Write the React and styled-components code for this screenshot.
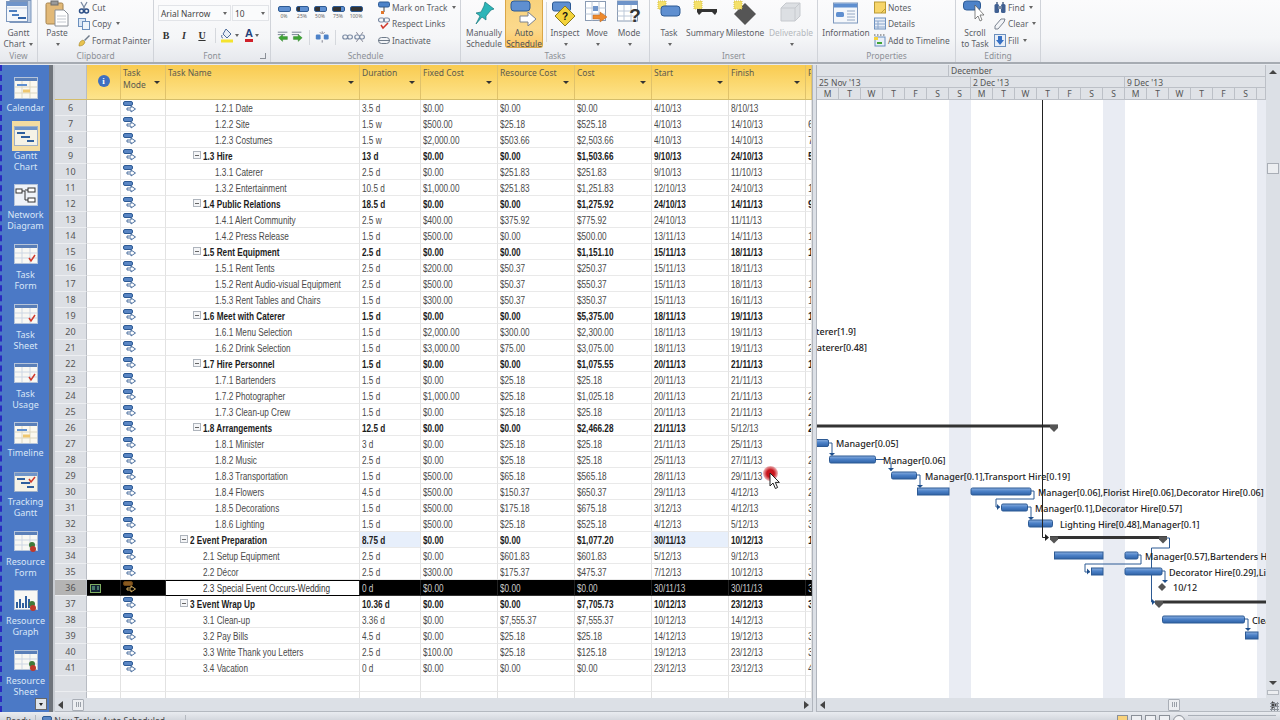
import React from 'react';
import styled, { createGlobalStyle } from 'styled-components';

const Global = createGlobalStyle`
  html, body { margin: 0; padding: 0; background: #fff; }
  #root { width: 1280px; height: 720px; overflow: hidden; }
`;

const UI_FONT = '"Noto Sans", "Liberation Sans", sans-serif';
const CELL_FONT = '"Liberation Sans", Arial, sans-serif';

// id, name, level, summary, duration, fixed, resource, cost, start, finish, pred
const tasks = [
  [6, '1.2.1 Date', 3, 0, '3.5 d', '$0.00', '$0.00', '$0.00', '4/10/13', '8/10/13', ''],
  [7, '1.2.2 Site', 3, 0, '1.5 w', '$500.00', '$25.18', '$525.18', '4/10/13', '14/10/13', '6'],
  [8, '1.2.3 Costumes', 3, 0, '1.5 w', '$2,000.00', '$503.66', '$2,503.66', '4/10/13', '14/10/13', '7'],
  [9, '1.3 Hire', 2, 1, '13 d', '$0.00', '$0.00', '$1,503.66', '9/10/13', '24/10/13', '5'],
  [10, '1.3.1 Caterer', 3, 0, '2.5 d', '$0.00', '$251.83', '$251.83', '9/10/13', '11/10/13', ''],
  [11, '1.3.2 Entertainment', 3, 0, '10.5 d', '$1,000.00', '$251.83', '$1,251.83', '12/10/13', '24/10/13', '1'],
  [12, '1.4 Public Relations', 2, 1, '18.5 d', '$0.00', '$0.00', '$1,275.92', '24/10/13', '14/11/13', '9'],
  [13, '1.4.1 Alert Community', 3, 0, '2.5 w', '$400.00', '$375.92', '$775.92', '24/10/13', '11/11/13', ''],
  [14, '1.4.2 Press Release', 3, 0, '1.5 d', '$500.00', '$0.00', '$500.00', '13/11/13', '14/11/13', '1'],
  [15, '1.5 Rent Equipment', 2, 1, '2.5 d', '$0.00', '$0.00', '$1,151.10', '15/11/13', '18/11/13', '1'],
  [16, '1.5.1 Rent Tents', 3, 0, '2.5 d', '$200.00', '$50.37', '$250.37', '15/11/13', '18/11/13', ''],
  [17, '1.5.2 Rent Audio-visual Equipment', 3, 0, '2.5 d', '$500.00', '$50.37', '$550.37', '15/11/13', '18/11/13', '1'],
  [18, '1.5.3 Rent Tables and Chairs', 3, 0, '1.5 d', '$300.00', '$50.37', '$350.37', '15/11/13', '16/11/13', '1'],
  [19, '1.6 Meet with Caterer', 2, 1, '1.5 d', '$0.00', '$0.00', '$5,375.00', '18/11/13', '19/11/13', '1'],
  [20, '1.6.1 Menu Selection', 3, 0, '1.5 d', '$2,000.00', '$300.00', '$2,300.00', '18/11/13', '19/11/13', ''],
  [21, '1.6.2 Drink Selection', 3, 0, '1.5 d', '$3,000.00', '$75.00', '$3,075.00', '18/11/13', '19/11/13', '2'],
  [22, '1.7 Hire Personnel', 2, 1, '1.5 d', '$0.00', '$0.00', '$1,075.55', '20/11/13', '21/11/13', '1'],
  [23, '1.7.1 Bartenders', 3, 0, '1.5 d', '$0.00', '$25.18', '$25.18', '20/11/13', '21/11/13', ''],
  [24, '1.7.2 Photographer', 3, 0, '1.5 d', '$1,000.00', '$25.18', '$1,025.18', '20/11/13', '21/11/13', '2'],
  [25, '1.7.3 Clean-up Crew', 3, 0, '1.5 d', '$0.00', '$25.18', '$25.18', '20/11/13', '21/11/13', '2'],
  [26, '1.8 Arrangements', 2, 1, '12.5 d', '$0.00', '$0.00', '$2,466.28', '21/11/13', '5/12/13', '2'],
  [27, '1.8.1 Minister', 3, 0, '3 d', '$0.00', '$25.18', '$25.18', '21/11/13', '25/11/13', ''],
  [28, '1.8.2 Music', 3, 0, '2.5 d', '$0.00', '$25.18', '$25.18', '25/11/13', '27/11/13', '2'],
  [29, '1.8.3 Transportation', 3, 0, '1.5 d', '$500.00', '$65.18', '$565.18', '28/11/13', '29/11/13', '2'],
  [30, '1.8.4 Flowers', 3, 0, '4.5 d', '$500.00', '$150.37', '$650.37', '29/11/13', '4/12/13', '2'],
  [31, '1.8.5 Decorations', 3, 0, '1.5 d', '$500.00', '$175.18', '$675.18', '3/12/13', '4/12/13', '3'],
  [32, '1.8.6 Lighting', 3, 0, '1.5 d', '$500.00', '$25.18', '$525.18', '4/12/13', '5/12/13', '3'],
  [33, '2 Event Preparation', 1, 1, '8.75 d', '$0.00', '$0.00', '$1,077.20', '30/11/13', '10/12/13', '1'],
  [34, '2.1 Setup Equipment', 2, 0, '2.5 d', '$0.00', '$601.83', '$601.83', '5/12/13', '9/12/13', ''],
  [35, '2.2 Décor', 2, 0, '2.5 d', '$300.00', '$175.37', '$475.37', '7/12/13', '10/12/13', '3'],
  [36, '2.3 Special Event Occurs-Wedding', 2, 0, '0 d', '$0.00', '$0.00', '$0.00', '30/11/13', '30/11/13', '3'],
  [37, '3 Event Wrap Up', 1, 1, '10.36 d', '$0.00', '$0.00', '$7,705.73', '10/12/13', '23/12/13', '3'],
  [38, '3.1 Clean-up', 2, 0, '3.36 d', '$0.00', '$7,555.37', '$7,555.37', '10/12/13', '14/12/13', ''],
  [39, '3.2 Pay Bills', 2, 0, '4.5 d', '$0.00', '$25.18', '$25.18', '14/12/13', '19/12/13', '3'],
  [40, '3.3 Write Thank you Letters', 2, 0, '2.5 d', '$100.00', '$25.18', '$125.18', '19/12/13', '23/12/13', '3'],
  [41, '3.4 Vacation', 2, 0, '0 d', '$0.00', '$0.00', '$0.00', '23/12/13', '23/12/13', '4'],
];

const COLS = '32px 34px 45px 194px 61px 77px 77px 77px 77px 77px 6px';
const SELECTED = 36;

const App = () => (
  <Page>
    <Global />
    <Ribbon>
      <Group $w={38} label="View">
        <LargeBtn $w={37}>
          <Ico><GanttIcon /></Ico>
          <span>Gantt</span>
          <span>Chart <Caret /></span>
        </LargeBtn>
      </Group>

      <Group $w={116} label="Clipboard" $pad={1}>
        <LargeBtn $w={36}>
          <Ico><PasteIcon /></Ico>
          <span>Paste</span>
          <span><Caret /></span>
        </LargeBtn>
        <SmallCol $ml={3}>
          <SmallRow><ScissorsIcon /> Cut</SmallRow>
          <SmallRow><CopyIcon /> Copy <Caret /></SmallRow>
          <SmallRow><BrushIcon /> Format Painter</SmallRow>
        </SmallCol>
      </Group>

      <Group $w={117} label="Font" launcher>
        <FontCol>
          <FontSelects>
            <FontBox $w={73}>Arial Narrow<Caret /></FontBox>
            <FontBox $w={37}>10<Caret /></FontBox>
          </FontSelects>
          <FontTools>
            <FontBtn><b>B</b></FontBtn>
            <FontBtn><i><b>I</b></i></FontBtn>
            <FontBtn><u><b>U</b></u></FontBtn>
            <ToolSep />
            <FillIcon /><Caret />
            <FontColor>A</FontColor><Caret />
          </FontTools>
        </FontCol>
      </Group>

      <Group $w={190} label="Schedule" $pad={4}>
        <ScheduleGrid>
          <PctRow>
            {['0%', '25%', '50%', '75%', '100%'].map((p, i) => (
              <Pct key={p}><PctBar $fill={i * 25} />{p}</Pct>
            ))}
          </PctRow>
          <ScheduleTools>
            <OutdentIcon color="#3fa535" dir="left" />
            <OutdentIcon color="#3fa535" dir="right" />
            <ToolSep />
            <SplitIcon />
            <ToolSep />
            <ChainIcon />
            <ChainIcon broken />
          </ScheduleTools>
        </ScheduleGrid>
        <SmallCol $ml={13}>
          <SmallRow><TrackIcon /> Mark on Track <Caret /></SmallRow>
          <SmallRow><RespectIcon /> Respect Links</SmallRow>
          <SmallRow><InactiveIcon /> Inactivate</SmallRow>
        </SmallCol>
      </Group>

      <Group $w={189} label="Tasks" $pad={4}>
        <LargeBtn $w={38}>
          <Ico><PinIcon /></Ico>
          <span>Manually</span>
          <span>Schedule</span>
        </LargeBtn>
        <LargeBtn $w={38} $active $ml={2}>
          <Ico><AutoIcon /></Ico>
          <span>Auto</span>
          <span>Schedule</span>
        </LargeBtn>
        <VSep />
        <LargeBtn $w={32}>
          <Ico><InspectIcon /></Ico>
          <span>Inspect</span>
          <span><Caret /></span>
        </LargeBtn>
        <LargeBtn $w={32}>
          <Ico><MoveIcon /></Ico>
          <span>Move</span>
          <span><Caret /></span>
        </LargeBtn>
        <LargeBtn $w={32}>
          <Ico><ModeIcon /></Ico>
          <span>Mode</span>
          <span><Caret /></span>
        </LargeBtn>
      </Group>

      <Group $w={168} label="Insert" $pad={1}>
        <LargeBtn $w={36}>
          <Ico><NewTaskIcon /></Ico>
          <span>Task</span>
          <span><Caret /></span>
        </LargeBtn>
        <LargeBtn $w={36}>
          <Ico><NewSummaryIcon /></Ico>
          <span>Summary</span>
        </LargeBtn>
        <LargeBtn $w={44}>
          <Ico><NewMilestoneIcon /></Ico>
          <span>Milestone</span>
        </LargeBtn>
        <LargeBtn $w={48} $disabled>
          <Ico><DeliverableIcon /></Ico>
          <span>Deliverable</span>
          <span><Caret /></span>
        </LargeBtn>
      </Group>

      <Group $w={138} label="Properties" $pad={5}>
        <LargeBtn $w={46}>
          <Ico><InfoCardIcon /></Ico>
          <span>Information</span>
        </LargeBtn>
        <SmallCol $ml={5}>
          <SmallRow><NoteIcon /> Notes</SmallRow>
          <SmallRow><DetailsIcon /> Details</SmallRow>
          <SmallRow><TimelineAddIcon /> Add to Timeline</SmallRow>
        </SmallCol>
      </Group>

      <Group $w={85} label="Editing" $pad={2}>
        <LargeBtn $w={34}>
          <Ico><ScrollIcon /></Ico>
          <span>Scroll</span>
          <span>to Task</span>
        </LargeBtn>
        <SmallCol $ml={2}>
          <SmallRow><FindIcon /> Find <Caret /></SmallRow>
          <SmallRow><ClearIcon /> Clear <Caret /></SmallRow>
          <SmallRow><FillDownIcon /> Fill <Caret /></SmallRow>
        </SmallCol>
      </Group>
    </Ribbon>

    <Main>
      <ViewBar>
        <ViewList>
          <ViewItem label={['Calendar']} $h={48}><CalendarView /></ViewItem>
          <ViewItem label={['Gantt', 'Chart']} $h={59} $active><GanttView /></ViewItem>
          <ViewItem label={['Network', 'Diagram']} $h={60}><NetworkView /></ViewItem>
          <ViewItem label={['Task', 'Form']} $h={60}><SheetView check /></ViewItem>
          <ViewItem label={['Task', 'Sheet']} $h={59}><SheetView check /></ViewItem>
          <ViewItem label={['Task', 'Usage']} $h={59}><SheetView check /></ViewItem>
          <ViewItem label={['Timeline']} $h={49}><CalendarView /></ViewItem>
          <ViewItem label={['Tracking', 'Gantt']} $h={60}><GanttView check /></ViewItem>
          <ViewItem label={['Resource', 'Form']} $h={59}><SheetView res /></ViewItem>
          <ViewItem label={['Resource', 'Graph']} $h={60}><GraphView /></ViewItem>
          <ViewItem label={['Resource', 'Sheet']} $h={50}><SheetView res /></ViewItem>
        </ViewList>
        <MoreViews><Caret $dark /></MoreViews>
      </ViewBar>
      <ViewStrip />

      <TablePane>
        <TableHead>
          <CornerCell />
          <HeadCell $center><InfoBadge>i</InfoBadge></HeadCell>
          <HeadCell>Task<br />Mode<HeadArrow /></HeadCell>
          <HeadCell>Task Name<HeadArrow /></HeadCell>
          <HeadCell>Duration<HeadArrow /></HeadCell>
          <HeadCell>Fixed Cost<HeadArrow /></HeadCell>
          <HeadCell>Resource Cost<HeadArrow /></HeadCell>
          <HeadCell>Cost<HeadArrow /></HeadCell>
          <HeadCell>Start<HeadArrow /></HeadCell>
          <HeadCell>Finish<HeadArrow /></HeadCell>
          <HeadCell>P</HeadCell>
        </TableHead>
        <TableBody>
          {tasks.map((t) => <TaskRow key={t[0]} t={t} />)}
          <BlankRow />
          <BlankRow />
        </TableBody>
        <HScroll>
          <ScrollArrow $dir="left" />
          <ScrollThumb $left={9}><Grip /></ScrollThumb>
          <ScrollFill />
          <ScrollArrow $dir="right" />
        </HScroll>
      </TablePane>

      <Splitter />

      <GanttPane>
        <GanttTop>
          <GanttCol>
            <TimeTier>
              <TimeCell $w={132} />
              <TimeCell $w={317}>December</TimeCell>
            </TimeTier>
            <TimeTier>
              <TimeCell $w={154}>25 Nov '13</TimeCell>
              <TimeCell $w={154}>2 Dec '13</TimeCell>
              <TimeCell $w={141}>9 Dec '13</TimeCell>
            </TimeTier>
            <TimeTier>
              {'MTWTFSSMTWTFSSMTWTFS'.split('').map((d, i) => (
                <DayCell key={i} $w={22}>{d}</DayCell>
              ))}
              <DayCell $w={9} />
            </TimeTier>
            <GanttChart />
          </GanttCol>
          <VScroll>
            <VArrow />
            <VThumb />
            <VArrow $down />
            <VSplit />
          </VScroll>
        </GanttTop>
        <HScroll>
          <ScrollArrow $dir="left" />
          <ScrollFill />
          <ScrollThumb $left={0}><Grip /></ScrollThumb>
          <ScrollFill $w={92} />
          <ScrollArrow $dir="right" />
          <Resize />
        </HScroll>
      </GanttPane>
    </Main>

    <StatusBar>
      <StatusItem $w={36}>Ready</StatusItem>
      <StatusItem $w={150}><ModeIcon16 /> New Tasks : Auto Scheduled</StatusItem>
      <StatusRight>
        <StatusView $active />
        <StatusView />
        <StatusView />
        <StatusView />
        <ZoomKnob />
        <ZoomTrack />
      </StatusRight>
    </StatusBar>

    <Pointer>
      <PointerGlow />
      <svg width="12" height="18" viewBox="0 0 12 18" style={{ position: 'relative' }}>
        <path d="M1 1v13l3-3 2.400 5.500 2.200-1L6.300 10.400H10.400z" fill="#fff" stroke="#222" strokeWidth="1" />
      </svg>
    </Pointer>
  </Page>
);

export default App;

/* ---------- table rows ---------- */

const TaskRow = ({ t }) => {
  const [id, name, level, summary, dur, fixed, res, cost, start, finish, pred] = t;
  const on = id === SELECTED;
  const bold = !!summary;
  const pad = level === 3 ? 49 : level === 2 ? 37 : 24;
  return (
    <Row>
      <RowNum $on={on}>{id}</RowNum>
      <Cell $on={on}>{on && <IndicatorIcon />}</Cell>
      <Cell $on={on}><ModeGlyph on={on} /></Cell>
      <NameCell $pad={pad} $bold={bold} $on={on}>
        {bold && <Collapse />}
        <Narrow>{name}</Narrow>
      </NameCell>
      <Cell $on={on} $bold={bold} $changed={id === 33}><Narrow>{dur}</Narrow></Cell>
      <Cell $on={on} $bold={bold}><Narrow>{fixed}</Narrow></Cell>
      <Cell $on={on} $bold={bold}><Narrow>{res}</Narrow></Cell>
      <Cell $on={on} $bold={bold}><Narrow>{cost}</Narrow></Cell>
      <Cell $on={on} $bold={bold} $changed={id === 33}><Narrow>{start}</Narrow></Cell>
      <Cell $on={on} $bold={bold && id !== 26}><Narrow>{finish}</Narrow></Cell>
      <Cell $on={on} $bold={bold}>{pred}</Cell>
    </Row>
  );
};

const BlankRow = () => (
  <Row>
    <RowNum />
    {Array.from({ length: 10 }).map((_, i) => <Cell key={i} />)}
  </Row>
);

/* ---------- gantt chart drawing ---------- */

const Bar = ({ x, w, y }) => (
  <rect x={x + 0.5} y={y - 3.5} width={w - 1} height={7} rx={1.5} fill="url(#taskBar)" stroke="#2d5a94" strokeWidth="1" />
);

const Summary = ({ x1, x2, y, start = true }) => (
  <g fill="#555">
    <rect x={x1} y={y - 1.5} width={x2 - x1} height={3} fill="#333" />
    {start && <path d={`M${x1} ${y - 1}h8v3l-4 4-4-4z`} />}
    <path d={`M${x2 - 8} ${y - 1}h8v3l-4 4-4-4z`} />
  </g>
);

const Link = ({ d, dir = 'down', x, y }) => (
  <g>
    <path d={d} fill="none" stroke="#2d5a94" strokeWidth="1" />
    {dir === 'down'
      ? <path d={`M${x - 3} ${y - 3}h6l-3 3z`} fill="#1e4f8c" />
      : <path d={`M${x - 3} ${y - 3}v6l3-3z`} fill="#1e4f8c" />}
  </g>
);

const Label = ({ x, y, anchor = 'start', children }) => (
  <text x={x} y={y + 1} textAnchor={anchor} fontFamily={UI_FONT} fontSize="9" fontWeight="500" fill="#222">
    {children}
  </text>
);

const GanttChart = () => (
  <ChartBox>
    <svg width="449" height="598" viewBox="817 100 449 598" style={{ display: 'block' }}>
      <defs>
        <linearGradient id="taskBar" x1="0" y1="0" x2="0" y2="1">
          <stop offset="0" stopColor="#8cb0e0" />
          <stop offset="0.45" stopColor="#4d82c8" />
          <stop offset="1" stopColor="#2f62a6" />
        </linearGradient>
      </defs>
      <rect x="817" y="100" width="449" height="598" fill="#fff" />
      {[949, 1103, 1257].map((x) => <rect key={x} x={x} y="100" width="22" height="598" fill="#e9ecf3" />)}

      <Label x={856} y={334} anchor="end">Caterer[1.9]</Label>
      <Label x={867} y={350} anchor="end">Caterer[0.48]</Label>

      <Summary x1={810} x2={1058} y={426} start={false} />

      <Bar x={812} w={17} y={443} />
      <Label x={836} y={446}>Manager[0.05]</Label>
      <Link d="M829 443h3v12" x={832} y={456} />

      <Bar x={829} w={47} y={459.5} />
      <path d="M876 459.500h8" stroke="#2d5a94" />
      <Label x={883} y={463}>Manager[0.06]</Label>
      <Link d="M891 463v8" x={891} y={471} />

      <Bar x={891} w={26} y={475.5} />
      <Label x={925} y={479}>Manager[0.1],Transport Hire[0.19]</Label>
      <Link d="M917 475h3v12" x={920} y={488} />

      <rect x="917.5" y="488" width="31.5" height="7" fill="url(#taskBar)" stroke="#2d5a94" />
      <rect x="971" y="488" width="60" height="7" rx="1.5" fill="url(#taskBar)" stroke="#2d5a94" />
      <Label x={1038} y={495}>Manager[0.06],Florist Hire[0.06],Decorator Hire[0.06]</Label>
      <Link d="M1031 491h3v8h-38v8h4" dir="right" x={1000} y={507} />

      <Bar x={1001} w={27} y={507.5} />
      <Label x={1035} y={511}>Manager[0.1],Decorator Hire[0.57]</Label>
      <Link d="M1028 507h3v11" x={1031} y={520} />

      <Bar x={1028} w={25} y={523.5} />
      <Label x={1060} y={527}>Lighting Hire[0.48],Manager[0.1]</Label>

      <path d="M1042.5 100V537.500h4" fill="none" stroke="#222" />
      <path d="M1045 534v7l4-3.500z" fill="#222" />

      <Summary x1={1050} x2={1167} y={537.5} />
      <Link d="M1167 538h2.500v10h-18v54h4" dir="right" x={1155} y={602} />

      <rect x="1054.5" y="552" width="48.5" height="7" fill="url(#taskBar)" stroke="#2d5a94" />
      <rect x="1125" y="552" width="13" height="7" rx="1.5" fill="url(#taskBar)" stroke="#2d5a94" />
      <Label x={1145} y={559}>Manager[0.57],Bartenders Hire[0.57]</Label>
      <Link d="M1138 555h3v9h-56v8h5" dir="right" x={1090} y={571.5} />

      <rect x="1091.5" y="568" width="11.5" height="7" fill="url(#taskBar)" stroke="#2d5a94" />
      <rect x="1125" y="568" width="37" height="7" rx="1.5" fill="url(#taskBar)" stroke="#2d5a94" />
      <Label x={1169} y={575}>Decorator Hire[0.29],Lighting Hire[0.19]</Label>
      <Link d="M1162 571h3v11" x={1165} y={583} />

      <path d="M1162 583l4 4-4 4-4-4z" fill="#555" />
      <Label x={1173} y={590}>10/12</Label>

      <Summary x1={1155} x2={1290} y={602} />

      <Bar x={1162} w={83} y={619.5} />
      <Label x={1252} y={623}>Clean-up</Label>
      <Link d="M1245 619h3v11" x={1248} y={631} />
      <rect x="1245.5" y="632" width="12.5" height="7" fill="url(#taskBar)" stroke="#2d5a94" />
    </svg>
  </ChartBox>
);

/* ---------- small building blocks ---------- */

const Group = ({ $w, $pad, label, launcher, children }) => (
  <GroupBox $w={$w}>
    <GroupBody $pad={$pad}>{children}</GroupBody>
    <GroupLabel>
      {label}
      {launcher && <Launcher />}
    </GroupLabel>
  </GroupBox>
);

const ViewItem = ({ label, $h, $active, children }) => (
  <ViewItemBox $h={$h}>
    <ViewIcon $active={$active}>{children}</ViewIcon>
    {label.map((l) => <span key={l}>{l}</span>)}
  </ViewItemBox>
);

/* ---------- icons ---------- */

const Window = ({ w = 24, h = 20, y = 0 }) => (
  <>
    <rect x="0.5" y={y + 0.5} width={w - 1} height={h - 1} fill="#f4f7fb" stroke="#7d97bd" />
    <rect x="1" y={y + 1} width={w - 2} height="4" fill="#6f94c9" />
  </>
);

const GanttIcon = () => (
  <svg width="26" height="26" viewBox="0 0 26 26">
    <rect x="4" y="0.5" width="21" height="22" fill="#b9cbe3" stroke="#7d97bd" />
    <Window w={22} h={21} y={1} />
    <path d="M3 11h8M6 15h7" stroke="#4d7fc0" strokeWidth="2" />
    <path d="M12 18h8" stroke="#2f62a6" strokeWidth="2" />
    <path d="M1 8h20" stroke="#ccd6e4" />
  </svg>
);

const PasteIcon = () => (
  <svg width="26" height="27" viewBox="0 0 26 27">
    <rect x="2" y="3" width="17" height="21" rx="1.5" fill="#e2b978" stroke="#a5824c" />
    <rect x="7" y="1" width="7" height="4" fill="#9a9a9a" stroke="#6d6d6d" />
    <path d="M11 10h9l4 4v12H11z" fill="#fff" stroke="#8a8f97" />
    <path d="M13 16h9M13 19h9M13 22h9" stroke="#c4c8cf" />
  </svg>
);

const ScissorsIcon = () => (
  <svg width="12" height="13" viewBox="0 0 12 13">
    <path d="M3 1l4 7M9 1L5 8" stroke="#7a8aa3" strokeWidth="1.3" />
    <circle cx="3.5" cy="10" r="2" fill="none" stroke="#2d4f86" strokeWidth="1.5" />
    <circle cx="8.5" cy="10" r="2" fill="none" stroke="#2d4f86" strokeWidth="1.5" />
  </svg>
);

const CopyIcon = () => (
  <svg width="12" height="13" viewBox="0 0 12 13">
    <rect x="0.5" y="1.5" width="7" height="8" fill="#dbe7f6" stroke="#6b8fbd" />
    <rect x="4.5" y="4.5" width="7" height="8" fill="#eef4fb" stroke="#6b8fbd" />
  </svg>
);

const BrushIcon = () => (
  <svg width="12" height="13" viewBox="0 0 12 13">
    <path d="M1 12c0-3 1-5 4-6l2 2c-1 3-3 4-6 4z" fill="#e8c24f" stroke="#a48627" strokeWidth="0.6" />
    <path d="M6 6l5-5 1 1-5 5z" fill="#6f7b8a" />
  </svg>
);

const FillIcon = () => (
  <svg width="12" height="15" viewBox="0 0 12 15">
    <path d="M5 1l5 5-4 4-4-4z" fill="#e9eef6" stroke="#4d6c9b" />
    <path d="M1 7c-1 2 0 3 1 3" stroke="#4d6c9b" fill="none" />
    <rect x="0" y="11.5" width="12" height="3" fill="#f4e32f" />
  </svg>
);

const OutdentIcon = ({ color, dir }) => (
  <svg width="16" height="14" viewBox="0 0 16 14">
    <path d="M1 1h12M1 4h9" stroke="#5c6b7d" />
    <path d={dir === 'left' ? 'M2 8l5-4v2.500h6v3.500H7v2.500z' : 'M14 8L9 4v2.500H3v3.500h6v2.500z'} fill={color} stroke="#2d7d28" strokeWidth="0.5" />
  </svg>
);

const SplitIcon = () => (
  <svg width="18" height="14" viewBox="0 0 18 14">
    <rect x="1" y="4" width="6" height="6" rx="1.5" fill="#4d82c8" />
    <rect x="11" y="4" width="6" height="6" rx="1.5" fill="#4d82c8" />
    <path d="M9 0v3M9 11v3M6 1l2 2M12 1l-2 2" stroke="#667" />
  </svg>
);

const ChainIcon = ({ broken }) => (
  <svg width="14" height="14" viewBox="0 0 14 14">
    <rect x="1" y="4.5" width="6" height="5" rx="2.5" fill="none" stroke="#7a8aa3" strokeWidth="1.5" />
    <rect x="7" y="4.5" width="6" height="5" rx="2.5" fill="none" stroke="#7a8aa3" strokeWidth="1.5" />
    {broken && <path d="M3 1l2 3M11 1L9 4M3 13l2-3M11 13l-2-3" stroke="#667" />}
  </svg>
);

const TrackIcon = () => (
  <svg width="12" height="13" viewBox="0 0 12 13">
    <rect x="0.5" y="1" width="11" height="5" rx="1.5" fill="#4d82c8" stroke="#2d5a94" />
    <path d="M6 6v5" stroke="#444" />
    <path d="M3 10h3v3H3z" fill="#e2762b" />
  </svg>
);

const RespectIcon = () => (
  <svg width="12" height="13" viewBox="0 0 12 13">
    <rect x="0.5" y="1" width="6" height="4" rx="2" fill="none" stroke="#7a8aa3" strokeWidth="1.2" />
    <rect x="5.5" y="1" width="6" height="4" rx="2" fill="none" stroke="#7a8aa3" strokeWidth="1.2" />
    <path d="M3 8l2 3 5-5" fill="none" stroke="#d0382b" strokeWidth="1.5" />
  </svg>
);

const InactiveIcon = () => (
  <svg width="12" height="13" viewBox="0 0 12 13">
    <rect x="0.5" y="3.5" width="11" height="6" rx="3" fill="#f2f4f7" stroke="#6f7b8a" />
    <path d="M0 6.500h12" stroke="#6f7b8a" />
  </svg>
);

const PinIcon = () => (
  <svg width="24" height="26" viewBox="0 0 24 26">
    <path d="M13 2l9 7-3 1-5 6 0 4-4-3-6 7 4-8-4-3 5-1 3-6z" fill="#2bb5b8" stroke="#17797c" strokeWidth="0.7" />
  </svg>
);

const AutoIcon = () => (
  <svg width="28" height="26" viewBox="0 0 28 26">
    <rect x="1" y="1" width="19" height="10" rx="3" fill="#5f8fd0" stroke="#2d5a94" />
    <path d="M10 16h8v-4l8 7-8 7v-4h-8z" fill="#fff" stroke="#7a8290" />
  </svg>
);

const InspectIcon = () => (
  <svg width="26" height="26" viewBox="0 0 26 26">
    <rect x="0.5" y="2" width="18" height="9" rx="2" fill="#5f8fd0" stroke="#2d5a94" />
    <path d="M13 6l10 10-10 10L3 16z" fill="#f4d33b" stroke="#8c7a1d" />
    <text x="13" y="20" textAnchor="middle" fontSize="10" fontWeight="700" fontFamily="Liberation Sans" fill="#111">?</text>
  </svg>
);

const MoveIcon = () => (
  <svg width="24" height="26" viewBox="0 0 24 26">
    <rect x="0.5" y="1.5" width="20" height="19" fill="#fff" stroke="#8a9bb3" />
    <path d="M7 1.500v19M14 1.500v19M0.500 8h20M0.500 14h20" stroke="#bcc8d8" />
    <rect x="8" y="6" width="5" height="5" fill="#6f94c9" />
    <path d="M8 15h7v-3l7 5-7 5v-3H8z" fill="#ee8a2c" stroke="#b9631a" strokeWidth="0.5" />
  </svg>
);

const ModeIcon = () => (
  <svg width="24" height="26" viewBox="0 0 24 26">
    <rect x="0.5" y="1" width="20" height="20" fill="#fff" stroke="#8a9bb3" />
    <rect x="0.5" y="1" width="20" height="4" fill="#6f94c9" />
    <path d="M7 5v16M14 5v16M0.500 11h20M0.500 16h20" stroke="#bcc8d8" />
    <text x="18" y="22" textAnchor="middle" fontSize="19" fontWeight="700" fontFamily="Liberation Sans" fill="#333">?</text>
  </svg>
);

const Spark = () => (
  <path d="M1 1h8v8H1z" fill="#f4e06a" stroke="#d6c14a" strokeDasharray="1 1" />
);

const NewTaskIcon = () => (
  <svg width="24" height="22" viewBox="0 0 24 22">
    <Spark />
    <rect x="4" y="6" width="19" height="10" rx="3" fill="#5f8fd0" stroke="#2d5a94" />
  </svg>
);

const NewSummaryIcon = () => (
  <svg width="24" height="22" viewBox="0 0 24 22">
    <Spark />
    <path d="M4 9h20v3l-2 3-3-3H9l-3 3-2-3z" fill="#333" />
  </svg>
);

const NewMilestoneIcon = () => (
  <svg width="24" height="26" viewBox="0 0 24 26">
    <path d="M12 3l11 11-11 11L1 14z" fill="#555" />
    <Spark />
  </svg>
);

const DeliverableIcon = () => (
  <svg width="22" height="24" viewBox="0 0 22 24">
    <path d="M1 8l5-5h14v13l-5 5H1z" fill="#dcdfe3" stroke="#c6c9ce" />
    <path d="M1 8h14v13M15 8l5-5" fill="none" stroke="#c6c9ce" />
  </svg>
);

const InfoCardIcon = () => (
  <svg width="26" height="24" viewBox="0 0 26 24">
    <rect x="0.5" y="3" width="24" height="20" fill="#f4f7fb" stroke="#7d97bd" />
    <rect x="1" y="3.5" width="23" height="4" fill="#5f8fd0" />
    <rect x="3" y="12" width="8" height="5" rx="1.5" fill="#5f8fd0" />
    <path d="M14 11h8M14 14h8M14 17h8M14 20h8" stroke="#94a8c4" />
  </svg>
);

const NoteIcon = () => (
  <svg width="12" height="13" viewBox="0 0 12 13">
    <rect x="0.5" y="1" width="11" height="11" fill="#f7d56a" stroke="#b99a35" />
    <path d="M7 12l4-4" stroke="#b99a35" />
  </svg>
);

const DetailsIcon = () => (
  <svg width="12" height="13" viewBox="0 0 12 13">
    <rect x="0.5" y="1" width="11" height="11" fill="#e8eef7" stroke="#6b8fbd" />
    <path d="M0.500 4h11M0.500 7h11M0.500 10h11M4 4v8" stroke="#8aa6cc" />
  </svg>
);

const TimelineAddIcon = () => (
  <svg width="12" height="13" viewBox="0 0 12 13">
    <path d="M0 1h12" stroke="#555" strokeDasharray="1.5 1.5" />
    <rect x="1" y="3" width="10" height="9" fill="#e8eef7" stroke="#6b8fbd" />
    <path d="M3 9h5" stroke="#3fa535" strokeWidth="2" />
    <path d="M0 3h4v3H0z" fill="#f4d33b" />
  </svg>
);

const ScrollIcon = () => (
  <svg width="24" height="26" viewBox="0 0 24 26">
    <rect x="0.5" y="1" width="17" height="9" rx="3" fill="#4d82c8" stroke="#2d5a94" />
    <path d="M12 5v14l3-3 2 5 2-1-2-5h4z" fill="#fff" stroke="#555" strokeWidth="0.7" />
  </svg>
);

const FindIcon = () => (
  <svg width="12" height="13" viewBox="0 0 12 13">
    <rect x="0.5" y="3" width="4.5" height="9" rx="1.5" fill="#3f5f92" />
    <rect x="7" y="3" width="4.5" height="9" rx="1.5" fill="#3f5f92" />
    <path d="M4 5h4v3H4z" fill="#7a8aa3" />
    <path d="M2 1h2v2H2zM8 1h2v2H8z" fill="#7a8aa3" />
  </svg>
);

const ClearIcon = () => (
  <svg width="12" height="13" viewBox="0 0 12 13">
    <path d="M1 9l6-7h4l-1 3-6 7H1z" fill="#f2f4f7" stroke="#7a8290" />
  </svg>
);

const FillDownIcon = () => (
  <svg width="12" height="13" viewBox="0 0 12 13">
    <rect x="0.5" y="0.5" width="11" height="12" fill="#e8eef7" stroke="#6b8fbd" />
    <path d="M4 2h4v4h2l-4 5-4-5h2z" fill="#3670c4" />
  </svg>
);

const CalendarView = () => (
  <svg width="24" height="22" viewBox="0 0 24 22">
    <rect x="0.5" y="0.5" width="23" height="21" fill="#fbf8ef" stroke="#b5c4da" />
    <rect x="1" y="1" width="22" height="3" fill="#5a7fb8" />
    <path d="M8 4v17M16 4v17M1 10h22M1 16h22" stroke="#dcd7c3" />
    <path d="M3 8h10" stroke="#5f8fd0" strokeWidth="2" />
    <path d="M9 14h7" stroke="#efc76f" strokeWidth="3" />
  </svg>
);

const GanttView = ({ check }) => (
  <svg width="24" height="20" viewBox="0 0 24 20">
    <rect x="0.5" y="0.5" width="23" height="19" fill="#f5f2e6" stroke="#9fb0c8" />
    <rect x="1" y="1" width="22" height="3" fill="#6f94c9" />
    <path d="M3 7h8" stroke="#2f5f9e" strokeWidth="2" />
    <path d="M7 11h9" stroke="#2f5f9e" strokeWidth="2" />
    <path d="M13 15h7" stroke="#2f5f9e" strokeWidth="2" />
    {check && <path d="M15 7l2 3 4-5" fill="none" stroke="#d0382b" strokeWidth="1.5" />}
  </svg>
);

const NetworkView = () => (
  <svg width="24" height="22" viewBox="0 0 24 22">
    <rect x="0.5" y="0.5" width="23" height="21" fill="#eef2f8" stroke="#b5c4da" />
    <rect x="2" y="5" width="6" height="4" fill="#fff" stroke="#333" />
    <rect x="14" y="4" width="7" height="4" fill="#fff" stroke="#333" />
    <rect x="14" y="14" width="7" height="4" fill="#fff" stroke="#333" />
    <path d="M8 7h3v9h3M11 6h3" fill="none" stroke="#333" />
  </svg>
);

const SheetView = ({ check, res }) => (
  <svg width="24" height="22" viewBox="0 0 24 22">
    <rect x="0.5" y="0.5" width="23" height="19" fill="#f8f8f4" stroke="#b5c4da" />
    <rect x="1" y="1" width="22" height="3" fill="#5a7fb8" />
    <path d="M8 4v15M16 4v15M1 9h22M1 14h22" stroke="#cdd6e3" />
    {check && <path d="M15 14l2 3 4-6" fill="none" stroke="#d0382b" strokeWidth="1.5" />}
    {res && (
      <g>
        <circle cx="18" cy="14" r="3" fill="#3f7a3a" />
        <circle cx="19" cy="18" r="3" fill="#c0392b" />
      </g>
    )}
  </svg>
);

const GraphView = () => (
  <svg width="24" height="22" viewBox="0 0 24 22">
    <rect x="0.5" y="0.5" width="23" height="19" fill="#f8f8f4" stroke="#b5c4da" />
    <path d="M3 18v-6M6 18v-9M9 18v-5M12 18V6M15 18V9" stroke="#2f5f9e" strokeWidth="2" />
    <circle cx="18" cy="14" r="3" fill="#3f7a3a" />
    <circle cx="19" cy="18" r="3" fill="#c0392b" />
  </svg>
);

const ModeGlyph = ({ on }) => (
  <svg width="13" height="12" viewBox="0 0 13 12" style={{ display: 'block', marginTop: -3 }}>
    <rect x="0.5" y="0.5" width="9" height="4" rx="1.5" fill={on ? '#8a5a20' : '#5a86c4'} stroke={on ? '#6b4515' : '#2d5a94'} />
    <path d="M4 7h4V5l4.500 3L8 11V9H4z" fill={on ? '#000' : '#fff'} stroke={on ? '#d8b060' : '#4a6f9e'} />
  </svg>
);

const ModeIcon16 = () => (
  <svg width="10" height="8" viewBox="0 0 10 8">
    <rect x="0.5" y="0.5" width="9" height="4" rx="1.5" fill="#5a86c4" stroke="#2d5a94" />
  </svg>
);

const IndicatorIcon = () => (
  <svg width="11" height="9" viewBox="0 0 11 9" style={{ display: 'block', marginLeft: 1 }}>
    <rect x="0.5" y="0.5" width="10" height="8" fill="#123" stroke="#7fae62" />
    <path d="M2 3h3M2 5h3M7 3h2M7 5h2" stroke="#7fd0a0" />
  </svg>
);

/* ---------- styles ---------- */

const Page = styled.div`
  position: relative;
  width: 1280px;
  height: 720px;
  overflow: hidden;
  display: flex;
  flex-direction: column;
  font-family: ${UI_FONT};
  background: #e6e9ee;
`;

const Ribbon = styled.div`
  display: flex;
  height: 62px;
  flex: none;
  background: linear-gradient(#fbfbfc 0%, #f5f6f8 60%, #e6e8ed 100%);
  border-bottom: 2px solid #a6abb2;
  color: #5c6066;
`;

const GroupBox = styled.div`
  width: ${(p) => p.$w}px;
  flex: none;
  box-sizing: border-box;
  border-right: 1px solid #d0d3d9;
  display: flex;
  flex-direction: column;
`;

const GroupBody = styled.div`
  display: flex;
  height: 50px;
  padding-left: ${(p) => p.$pad || 0}px;
`;

const GroupLabel = styled.div`
  position: relative;
  flex: 1;
  text-align: center;
  font-size: 8.4px;
  line-height: 11px;
  color: #8c9096;
`;

const Launcher = styled.i`
  position: absolute;
  right: 4px;
  top: 3px;
  width: 5px;
  height: 5px;
  border-right: 1px solid #8a8f97;
  border-bottom: 1px solid #8a8f97;
`;

const LargeBtn = styled.div`
  width: ${(p) => p.$w}px;
  flex: none;
  margin-left: ${(p) => p.$ml || 0}px;
  height: 48px;
  box-sizing: border-box;
  display: flex;
  flex-direction: column;
  align-items: center;
  font-size: 8.4px;
  line-height: 10.5px;
  white-space: nowrap;
  color: ${(p) => (p.$disabled ? '#b4b7bc' : '#5c6066')};
  border-radius: 0 0 3px 3px;
  ${(p) => p.$active && `
    background: linear-gradient(#f8d27c, #fbd98c 60%, #fdc766);
    border: 1px solid #d9a648;
    border-top: 0;
    color: #4c4f55;
  `}
`;

const Ico = styled.div`
  height: 28px;
  flex: none;
  display: flex;
  align-items: flex-start;
  justify-content: center;
`;

const Caret = styled.i`
  display: inline-block;
  width: 0;
  height: 0;
  margin-left: ${(p) => (p.$dark ? 0 : 2)}px;
  vertical-align: middle;
  border-left: 2.5px solid transparent;
  border-right: 2.5px solid transparent;
  border-top: 3px solid ${(p) => (p.$dark ? '#222' : '#666')};
`;

const SmallCol = styled.div`
  display: flex;
  flex-direction: column;
  margin-left: ${(p) => p.$ml || 0}px;
  margin-top: -1px;
`;

const SmallRow = styled.div`
  height: 16.5px;
  display: flex;
  align-items: center;
  gap: 2px;
  font-size: 8.4px;
  white-space: nowrap;
  color: #5c6066;
`;

const FontCol = styled.div`
  display: flex;
  flex-direction: column;
  padding: 5px 0 0 4px;
`;

const FontSelects = styled.div`
  display: flex;
  gap: 1px;
`;

const FontBox = styled.div`
  width: ${(p) => p.$w}px;
  height: 16px;
  box-sizing: border-box;
  padding: 0 3px 0 2px;
  display: flex;
  align-items: center;
  justify-content: space-between;
  background: #fafbfc;
  border: 1px solid #e2e4e8;
  font-size: 8.4px;
  color: #444;
`;

const FontTools = styled.div`
  display: flex;
  align-items: center;
  height: 18px;
  margin: 5px 0 0 -1px;
  font-size: 10px;
  color: #333;
`;

const FontBtn = styled.span`
  width: 18px;
  text-align: center;
  font-family: "Liberation Serif", serif;
`;

const ToolSep = styled.i`
  width: 1px;
  height: 15px;
  background: #d5d8dd;
  margin: 0 5px 0 4px;
`;

const FontColor = styled.span`
  margin-left: 6px;
  font-family: "Liberation Sans", sans-serif;
  font-weight: 700;
  font-size: 11px;
  line-height: 11px;
  color: #1f3f7a;
  border-bottom: 3px solid #d0202a;
`;

const ScheduleGrid = styled.div`
  display: flex;
  flex-direction: column;
  width: 90px;
`;

const PctRow = styled.div`
  display: flex;
  padding-top: 6px;
  height: 20px;
`;

const Pct = styled.div`
  width: 18px;
  text-align: center;
  font-size: 5px;
  line-height: 6px;
  color: #666;
`;

const PctBar = styled.div`
  width: 13px;
  height: 6px;
  margin: 0 auto 1px;
  border-radius: 2px;
  border: 1px solid #2d5a94;
  box-sizing: border-box;
  background: linear-gradient(to right, #333 ${(p) => p.$fill}%, #5f8fd0 ${(p) => p.$fill}%);
`;

const ScheduleTools = styled.div`
  display: flex;
  align-items: center;
  height: 18px;
  margin-top: 2px;
  padding-left: 2px;
  gap: 1px;
`;

const VSep = styled.i`
  width: 1px;
  height: 40px;
  margin: 2px 2px 0 3px;
  background: #d5d8dd;
`;

const Main = styled.div`
  flex: 1;
  display: flex;
  min-height: 0;
  padding-top: 1px;
`;

const ViewBar = styled.div`
  position: relative;
  width: 49px;
  flex: none;
  box-sizing: border-box;
  background: #4b79c6;
  border-left: 2px dashed #2a2ac0;
`;

const ViewList = styled.div`
  display: flex;
  flex-direction: column;
  padding-top: 10px;
`;

const ViewItemBox = styled.div`
  height: ${(p) => p.$h}px;
  display: flex;
  flex-direction: column;
  align-items: center;
  font-size: 9px;
  line-height: 11px;
  color: #d9e6f7;
  white-space: nowrap;
`;

const ViewIcon = styled.div`
  height: 26px;
  margin-bottom: 1px;
  display: flex;
  align-items: center;
  ${(p) => p.$active && `
    outline: 2px solid #f4dca0;
    background: #f4dca0;
  `}
`;

const MoreViews = styled.div`
  position: absolute;
  right: 2px;
  bottom: 2px;
  width: 10px;
  height: 10px;
  background: #dfe4ea;
  border: 1px solid #666;
  display: flex;
  align-items: center;
  justify-content: center;
`;

const ViewStrip = styled.div`
  width: 6px;
  flex: none;
  background: linear-gradient(to right, #6f747b 60%, #c9cdd3 60%);
`;

const TablePane = styled.div`
  width: 757px;
  flex: none;
  display: flex;
  flex-direction: column;
`;

const TableHead = styled.div`
  display: grid;
  grid-template-columns: ${COLS};
  height: 35px;
  flex: none;
  border-bottom: 1px solid #d4bd6a;
  box-sizing: border-box;
`;

const CornerCell = styled.div`
  background: #d3d7dd;
  border-right: 1px solid #b8bcc3;
`;

const HeadCell = styled.div`
  position: relative;
  overflow: hidden;
  box-sizing: border-box;
  padding: 2px 0 0 2px;
  font-size: 8.5px;
  line-height: 11.5px;
  color: #5a5a50;
  background: linear-gradient(#f9cb50, #fde48c);
  border-right: 1px solid #e0c26a;
  ${(p) => p.$center && `
    display: flex;
    align-items: center;
    justify-content: center;
    padding: 0 0 2px;
  `}
`;

const HeadArrow = styled.i`
  position: absolute;
  right: 5px;
  top: 16px;
  width: 0;
  height: 0;
  border-left: 3px solid transparent;
  border-right: 3px solid transparent;
  border-top: 3px solid #333;
`;

const InfoBadge = styled.span`
  width: 12px;
  height: 12px;
  border-radius: 50%;
  background: #3f6fc0;
  color: #fff;
  font-size: 9px;
  font-weight: 700;
  line-height: 12px;
  text-align: center;
  font-family: "Liberation Serif", serif;
`;

const TableBody = styled.div`
  flex: 1;
  min-height: 0;
  overflow: hidden;
  background: #fff;
`;

const Row = styled.div`
  display: grid;
  grid-template-columns: ${COLS};
  height: 16px;
`;

const RowNum = styled.div`
  background: ${(p) => (p.$on ? '#b4b4b4' : '#dcdfe4')};
  border-right: 1px solid #b8bcc3;
  border-bottom: 1px solid #eceef1;
  box-sizing: border-box;
  text-align: center;
  font-size: 9px;
  line-height: 15px;
  color: #555;
`;

const Cell = styled.div`
  box-sizing: border-box;
  display: flex;
  align-items: center;
  overflow: hidden;
  white-space: nowrap;
  padding: 1px 0 0 2px;
  font-family: ${CELL_FONT};
  font-size: 10px;
  font-weight: ${(p) => (p.$bold ? 700 : 400)};
  color: ${(p) => (p.$on ? '#ccc' : p.$bold ? '#1c1c1c' : '#4a4a4a')};
  background: ${(p) => (p.$on ? '#000' : p.$changed ? '#e7effb' : '#fff')};
  border-right: 1px solid ${(p) => (p.$on ? '#222' : '#e2e2e2')};
  border-bottom: 1px solid ${(p) => (p.$on ? '#333' : '#e9e9e9')};
`;

// Arial Narrow is not installed: Liberation Sans squeezed to the same 82% width
const Narrow = styled.span`
  display: inline-block;
  flex: none;
  transform: scaleX(0.82);
  transform-origin: left center;
`;

const NameCell = styled(Cell)`
  position: relative;
  padding-left: ${(p) => p.$pad}px;
  background: #fff;
  color: ${(p) => (p.$on ? '#333' : p.$bold ? '#1c1c1c' : '#4a4a4a')};
  border-bottom-color: ${(p) => (p.$on ? '#000' : '#e9e9e9')};
  border-top: ${(p) => (p.$on ? '1px solid #000' : '0')};
`;

const Collapse = styled.i`
  position: absolute;
  margin-left: -10px;
  top: 3px;
  width: 6px;
  height: 6px;
  border: 1px solid #aeb4bc;
  background: linear-gradient(#666, #666) center / 4px 1px no-repeat, #f4f5f7;
`;

const HScroll = styled.div`
  height: 13px;
  flex: none;
  display: flex;
  align-items: center;
  padding: 0 3px;
  background: #dce0e6;
  border-bottom: 1px solid #b4b9c0;
`;

const ScrollArrow = styled.i`
  width: 0;
  height: 0;
  flex: none;
  border-top: 4px solid transparent;
  border-bottom: 4px solid transparent;
  ${(p) => (p.$dir === 'left' ? 'border-right: 5px solid #444;' : 'border-left: 5px solid #444;')}
`;

const ScrollThumb = styled.div`
  width: 12px;
  height: 12px;
  flex: none;
  margin-left: ${(p) => p.$left}px;
  box-sizing: border-box;
  border: 1px solid #a9aeb6;
  border-radius: 1px;
  background: #eceef1;
  display: flex;
  align-items: center;
  justify-content: center;
`;

const Grip = styled.i`
  width: 5px;
  height: 5px;
  background: repeating-linear-gradient(to right, #9aa0a8 0 1px, transparent 1px 2px);
`;

const ScrollFill = styled.div`
  ${(p) => (p.$w ? `width: ${p.$w}px; flex: none;` : 'flex: 1;')}
`;

const Splitter = styled.div`
  width: 5px;
  flex: none;
  box-sizing: border-box;
  background: #dce0e6;
  border-left: 1px solid #b0b5bd;
  border-right: 1px solid #b0b5bd;
`;

const GanttPane = styled.div`
  position: relative;
  flex: 1;
  min-width: 0;
  display: flex;
  flex-direction: column;
`;

const GanttTop = styled.div`
  flex: 1;
  min-height: 0;
  display: flex;
`;

const GanttCol = styled.div`
  width: 449px;
  flex: none;
  display: flex;
  flex-direction: column;
`;

const TimeTier = styled.div`
  display: flex;
  height: 11.67px;
  flex: none;
`;

const TimeCell = styled.div`
  width: ${(p) => p.$w}px;
  flex: none;
  box-sizing: border-box;
  padding-left: 2px;
  background: #dfe2e7;
  border-right: 1px solid #bcc0c7;
  border-bottom: 1px solid #bcc0c7;
  font-size: 8.5px;
  line-height: 11px;
  color: #555;
  white-space: nowrap;
`;

const DayCell = styled(TimeCell)`
  padding: 0;
  text-align: center;
  overflow: hidden;
`;

const ChartBox = styled.div`
  flex: 1;
  min-height: 0;
  overflow: hidden;
  background: #fff;
`;

const VScroll = styled.div`
  flex: 1;
  display: flex;
  flex-direction: column;
  align-items: center;
  background: #dce0e6;
  padding: 5px 0 3px;
`;

const VArrow = styled.i`
  width: 0;
  height: 0;
  border-left: 4px solid transparent;
  border-right: 4px solid transparent;
  ${(p) => (p.$down ? 'border-top: 4px solid #444; margin-top: auto;' : 'border-bottom: 4px solid #444;')}
`;

const VThumb = styled.div`
  width: 12px;
  height: 11px;
  margin-top: 89px;
  box-sizing: border-box;
  background: #eceef1;
  border: 1px solid #a9aeb6;
`;

const VSplit = styled.div`
  width: 12px;
  height: 5px;
  margin-top: 5px;
  background: #eceef1;
  border: 1px solid #b4b9c0;
  box-sizing: border-box;
`;

const Resize = styled.i`
  position: absolute;
  right: 1px;
  bottom: 1px;
  width: 9px;
  height: 9px;
  background: radial-gradient(#8a9098 1px, transparent 1.2px) 0 0 / 3px 3px;
`;

const StatusBar = styled.div`
  height: 8px;
  flex: none;
  display: flex;
  overflow: hidden;
  background: linear-gradient(#e9ecf0, #d4d8de);
  font-size: 8.5px;
  line-height: 12px;
  padding-top: 3px;
  box-sizing: border-box;
  color: #444;
`;

const StatusItem = styled.div`
  width: ${(p) => p.$w}px;
  box-sizing: border-box;
  padding-left: 6px;
  white-space: nowrap;
  border-right: 1px solid #b4b9c0;
`;

const StatusRight = styled.div`
  margin-left: auto;
  display: flex;
  align-items: flex-start;
  gap: 3px;
  padding-right: 4px;
`;

const StatusView = styled.i`
  width: 9px;
  height: 8px;
  border: 1px solid #8a9098;
  background: ${(p) => (p.$active ? '#f8d27c' : '#eef0f3')};
`;

const ZoomKnob = styled.i`
  width: 10px;
  height: 10px;
  border-radius: 50%;
  border: 1px solid #8a9098;
  background: #f4f5f7;
`;

const ZoomTrack = styled.i`
  width: 88px;
  height: 8px;
  background: linear-gradient(#aab0b8, #aab0b8) center top / 100% 1px no-repeat;
`;

const Pointer = styled.div`
  position: absolute;
  left: 769px;
  top: 472px;
  width: 12px;
  height: 18px;
`;

const PointerGlow = styled.i`
  position: absolute;
  left: -6px;
  top: -6px;
  width: 15px;
  height: 15px;
  border-radius: 50%;
  background: radial-gradient(#c8141c 35%, rgba(200, 20, 28, 0.4) 65%, transparent 100%);
`;
